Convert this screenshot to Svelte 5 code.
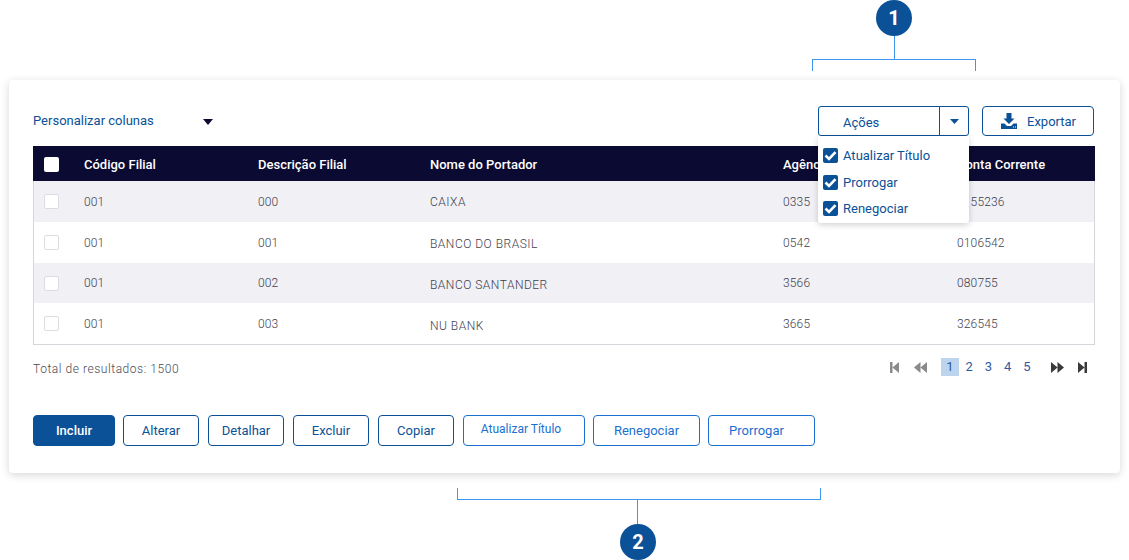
<script>
  const columns = ['Código Filial', 'Descrição Filial', 'Nome do Portador', 'Agência', 'Conta Corrente'];

  const rows = [
    { filial: '001', descricao: '000', portador: 'CAIXA', agencia: '0335', conta: '0155236', shift: 0 },
    { filial: '001', descricao: '001', portador: 'BANCO DO BRASIL', agencia: '0542', conta: '0106542', shift: 2 },
    { filial: '001', descricao: '002', portador: 'BANCO SANTANDER', agencia: '3566', conta: '080755', shift: 3 },
    { filial: '001', descricao: '003', portador: 'NU BANK', agencia: '3665', conta: '326545', shift: 5 }
  ];

  const acoes = ['Atualizar Título', 'Prorrogar', 'Renegociar'];
  const mainButtons = ['Alterar', 'Detalhar', 'Excluir', 'Copiar'];
  const pages = [1, 2, 3, 4, 5];
</script>

<div class="page">
  <!-- Callouts -->
  <div class="callout callout-top">
    <span class="badge">1</span>
    <span class="stem"></span>
    <span class="bracket"></span>
  </div>

  <div class="card">
    <div class="toolbar">
      <div class="columns-select">
        <span>Personalizar colunas</span>
        <svg width="10" height="6" viewBox="0 0 10 6"><path d="M0 0h10L5 6z" fill="#0a0a33" /></svg>
      </div>

      <div class="toolbar-right">
        <div class="split">
          <button class="split-main">Ações</button>
          <button class="split-arrow" aria-label="Abrir ações">
            <svg width="9" height="5" viewBox="0 0 9 5"><path d="M0 0h9L4.500 5z" fill="#0b5197" /></svg>
          </button>

          <div class="menu">
            {#each acoes as acao}
              <div class="menu-item">
                <span class="menu-check">
                  <svg width="15" height="15" viewBox="0 0 15 15">
                    <path d="M2.500 7.500l3.500 3.400 6.500-6.800" fill="none" stroke="#fff" stroke-width="2.600" />
                  </svg>
                </span>
                {acao}
              </div>
            {/each}
          </div>
        </div>

        <button class="export">
          <svg width="16" height="16" viewBox="0 0 16 16">
            <path d="M5.500 0h5v5.500h3L8 11 2.500 5.500h3z" fill="#0b5197" />
            <path d="M0 10.500h3.500L6 13h4l2.500-2.500H16V16H0z" fill="#0b5197" />
            <path d="M12 13.500h1v1h-1zM14 13.500h1v1h-1z" fill="#fff" />
          </svg>
          Exportar
        </button>
      </div>
    </div>

    <div class="table">
      <div class="row head">
        <div class="check-cell"><span class="check head-check"></span></div>
        {#each columns as col}
          <div>{col}</div>
        {/each}
      </div>
      {#each rows as row}
        <div class="row body">
          <div class="check-cell"><span class="check"></span></div>
          <div>{row.filial}</div>
          <div>{row.descricao}</div>
          <div class="portador" style="padding-top: {row.shift}px">{row.portador}</div>
          <div>{row.agencia}</div>
          <div>{row.conta}</div>
        </div>
      {/each}
    </div>

    <div class="table-foot">
      <span class="total">Total de resultados: 1500</span>

      <div class="pager">
        <svg class="faded first" width="10" height="11" viewBox="0 0 10 11"><path d="M0 0h2.500v11H0zM9 0v11L2.500 5.500z" fill="#8a8a8a" /></svg>
        <svg class="faded prev" width="13" height="11" viewBox="0 0 13 11"><path d="M6.500 0v11L0 5.500zM13 0v11L6.500 5.500z" fill="#8a8a8a" /></svg>
        <div class="page-nums">
          {#each pages as p}
            <span class="page-num" class:active={p === 1}>{p}</span>
          {/each}
        </div>
        <svg class="next" width="13" height="11" viewBox="0 0 13 11"><path d="M0 0l6.500 5.500L0 11zM6.500 0L13 5.500 6.500 11z" fill="#3a3a3a" /></svg>
        <svg class="last" width="10" height="11" viewBox="0 0 10 11"><path d="M1 0l6.500 5.500L1 11zM7.500 0H10v11H7.500z" fill="#3a3a3a" /></svg>
      </div>
    </div>

    <div class="actions">
      <button class="btn primary">Incluir</button>
      {#each mainButtons as label}
        <button class="btn">{label}</button>
      {/each}
      <div class="extra">
        <button class="btn bright atualizar">Atualizar Título</button>
        <button class="btn bright wide">Renegociar</button>
        <button class="btn bright wide prorrogar">Prorrogar</button>
      </div>
    </div>
  </div>

  <div class="callout callout-bottom">
    <span class="bracket"></span>
    <span class="stem"></span>
    <span class="badge">2</span>
  </div>
</div>

<style>
  :global(body) {
    margin: 0;
    background: #fff;
    font-family: Roboto, "Liberation Sans", sans-serif;
  }

  .page {
    position: relative;
    width: 1129px;
    height: 560px;
    padding: 80px 9px 0;
    box-sizing: border-box;
    overflow: hidden;
  }

  .card {
    height: 393px;
    padding: 26px 26px 0 24px;
    box-sizing: border-box;
    background: #fff;
    border-radius: 4px;
    box-shadow: 0 2px 8px rgba(0, 0, 0, 0.16);
  }

  /* Callouts */
  .callout {
    position: absolute;
    display: flex;
    flex-direction: column;
    align-items: center;
  }

  .callout-top {
    left: 812px;
    top: 0;
    width: 164px;
  }

  .callout-bottom {
    left: 457px;
    top: 488px;
    width: 364px;
  }

  .badge {
    width: 36px;
    height: 36px;
    border-radius: 50%;
    background: #0b5197;
    color: #fff;
    font-size: 20px;
    font-weight: 700;
    line-height: 36px;
    text-align: center;
  }

  .stem {
    width: 1px;
    height: 23px;
    background: #3f97f0;
  }

  .callout-bottom .stem {
    height: 24px;
    margin-left: -4px;
  }

  .callout-bottom .badge {
    margin-left: -2px;
  }

  .bracket {
    width: 100%;
    height: 12px;
    box-sizing: border-box;
    border: 1px solid #3f97f0;
    border-bottom: none;
  }

  .callout-bottom .bracket {
    border-top: none;
    border-bottom: 1px solid #3f97f0;
  }

  /* Toolbar */
  .toolbar {
    display: flex;
    justify-content: space-between;
    height: 40px;
  }

  .columns-select {
    display: flex;
    align-items: center;
    gap: 49px;
    height: 29px;
    color: #0b5197;
    font-size: 13px;
  }

  .columns-select svg {
    margin: 3px 0 0 0;
  }

  .toolbar-right {
    display: flex;
    gap: 13px;
    height: 30px;
  }

  .split {
    position: relative;
    display: flex;
    width: 151px;
    box-sizing: border-box;
    border: 1px solid #0b5197;
    border-radius: 3px;
  }

  button {
    font-family: inherit;
    background: #fff;
    cursor: pointer;
  }

  .split-main {
    width: 121px;
    padding: 2px 0 0 24px;
    border: none;
    border-right: 1px solid #0b5197;
    background: transparent;
    color: #0b5197;
    font-size: 13px;
    text-align: left;
  }

  .split-arrow {
    flex: 1;
    padding: 0;
    border: none;
    background: transparent;
    display: flex;
    align-items: center;
    justify-content: center;
  }

  .menu {
    position: absolute;
    top: 29px;
    left: -1px;
    width: 151px;
    height: 87px;
    padding-top: 6px;
    box-sizing: border-box;
    background: #fff;
    border-radius: 0 0 3px 3px;
    box-shadow: 0 2px 6px rgba(0, 0, 0, 0.18);
    z-index: 5;
  }

  .menu-item {
    display: flex;
    align-items: center;
    gap: 5px;
    height: 26px;
    padding-left: 5px;
    color: #0b5197;
    font-size: 13px;
  }

  .menu-item:nth-child(2) {
    padding-top: 1px;
  }

  .menu-check {
    width: 15px;
    height: 15px;
    border-radius: 2px;
    background: #0b5197;
    display: flex;
    align-items: center;
    justify-content: center;
  }

  .export {
    display: flex;
    align-items: center;
    gap: 10px;
    width: 112px;
    padding: 0 0 0 18px;
    box-sizing: border-box;
    border: 1px solid #0b5197;
    border-radius: 4px;
    color: #0b5197;
    font-size: 13px;
  }

  /* Table */
  .table {
    width: 1062px;
    border: 1px solid #d5d5dc;
    border-top: none;
    box-sizing: border-box;
  }

  .row {
    display: grid;
    grid-template-columns: 50px 174px 172px 353px 174px 1fr;
    align-items: center;
    font-size: 12px;
    letter-spacing: 0.15px;
  }

  .head {
    height: 35px;
    margin: 0 -1px;
    padding: 1px 0 0 1px;
    box-sizing: border-box;
    background: #0a0a33;
    color: #fff;
    font-size: 13px;
    font-weight: 500;
    letter-spacing: 0;
  }

  .body {
    height: 41px;
    color: #3f3f50;
    font-weight: 300;
  }

  .body:nth-child(even) {
    background: #f0f0f5;
  }

  /* the third row is a pixel shorter in the original */
  .body:nth-child(4) {
    height: 40px;
  }

  .portador {
    letter-spacing: 0.5px;
  }

  .check-cell {
    display: flex;
    padding-left: 10px;
  }

  .check {
    width: 15px;
    height: 15px;
    box-sizing: border-box;
    background: #fff;
    border: 1px solid #dcdce2;
    border-radius: 2px;
  }

  .head-check {
    border: none;
  }

  .table-foot {
    display: flex;
    justify-content: space-between;
    align-items: center;
    height: 47px;
  }

  .total {
    color: #4a4a55;
    font-size: 12px;
    font-weight: 300;
    letter-spacing: 0.55px;
  }

  .pager {
    display: flex;
    align-items: center;
    margin: -3px 7px 0 0;
  }

  .first {
    margin-right: 14px;
  }

  .page-nums {
    display: flex;
    gap: 1.250px;
    margin: 0 15px 0 14px;
  }

  .page-num {
    width: 18px;
    height: 18px;
    line-height: 18px;
    text-align: center;
    color: #2f5c9e;
    font-size: 13px;
  }

  .page-num.active {
    background: #bcd4ee;
  }

  .next {
    margin-right: 13px;
  }

  /* Action buttons */
  .actions {
    display: flex;
    gap: 9px;
    margin-top: 23px;
  }

  .extra {
    display: flex;
    gap: 8px;
  }

  .btn {
    width: 76px;
    height: 31px;
    padding: 0;
    box-sizing: border-box;
    border: 1px solid #0b5197;
    border-radius: 4px;
    color: #0b5197;
    font-size: 13px;
  }

  .btn.primary {
    width: 82px;
    margin-right: -1px;
    background: #0b5197;
    color: #fff;
    font-weight: 500;
  }

  .btn.bright {
    border-color: #1a6fd0;
    color: #1a6fd0;
  }

  .atualizar {
    width: 122px;
    padding: 0 6px 3px 0;
    font-size: 12px;
  }

  .wide {
    width: 107px;
  }

  .prorrogar {
    padding-right: 10px;
  }
</style>
